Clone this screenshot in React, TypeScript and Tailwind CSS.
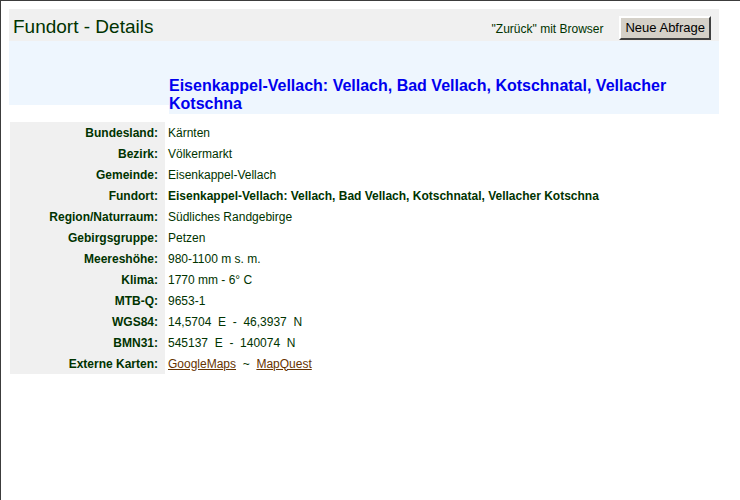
const rows: [string, React.ReactNode][] = [
  ["Bundesland:", "Kärnten"],
  ["Bezirk:", "Völkermarkt"],
  ["Gemeinde:", "Eisenkappel-Vellach"],
  ["Fundort:", <b key="f">Eisenkappel-Vellach: Vellach, Bad Vellach, Kotschnatal, Vellacher Kotschna</b>],
  ["Region/Naturraum:", "Südliches Randgebirge"],
  ["Gebirgsgruppe:", "Petzen"],
  ["Meereshöhe:", "980-1100 m s. m."],
  ["Klima:", "1770 mm - 6° C"],
  ["MTB-Q:", "9653-1"],
  ["WGS84:", <span key="w" className="whitespace-pre">14,5704  E  -  46,3937  N</span>],
  ["BMN31:", <span key="b" className="whitespace-pre">545137  E  -  140074  N</span>],
  [
    "Externe Karten:",
    <span key="e" className="whitespace-pre">
      <a href="#" className="text-[#663300] underline">GoogleMaps</a>
      {"  ~  "}
      <a href="#" className="text-[#663300] underline">MapQuest</a>
    </span>,
  ],
];

export default function App() {
  return (
    <div className="min-h-[500px] border-l border-t border-[#3c3c3c] bg-white pl-2 pt-2 font-['Liberation_Sans',Arial,sans-serif] text-[#003300]">
      {/* Header bar */}
      <div className="flex h-8 w-[710px] items-end justify-between bg-[#f0f0f0] pl-1 pr-2">
        <h1 className="pb-[2px] text-[19px] leading-6">Fundort - Details</h1>
        <div className="flex items-end gap-4">
          <span className="pb-[4px] text-[12px] leading-4">"Zurück" mit Browser</span>
          <button className="mb-[1px] h-6 border-2 border-t-white border-l-white border-r-[#404040] border-b-[#404040] bg-[#d4d0c8] px-[4px] text-[13px] leading-4 text-black">
            Neue Abfrage
          </button>
        </div>
      </div>

      {/* Location heading */}
      <div className="flex w-[710px] items-start">
        <div className="h-16 w-[160px] bg-[#eef6fe]" />
        <h2 className="h-[73px] flex-1 bg-[#eef6fe] pt-[36px] text-[16px] font-bold leading-[18px] text-[#0000ee]">
          Eisenkappel-Vellach: Vellach, Bad Vellach, Kotschnatal, Vellacher Kotschna
        </h2>
      </div>

      {/* Details table */}
      <div className="mt-2 ml-[1px] grid grid-cols-[155px_1fr] text-[12px]">
        {rows.map(([label, value]) => (
          <div key={label} className="contents">
            <div className="flex h-[21px] items-center justify-end bg-[#f0f0f0] pr-[7px] font-bold">{label}</div>
            <div className="flex h-[21px] items-center pl-[3px]">{value}</div>
          </div>
        ))}
      </div>
    </div>
  );
}
